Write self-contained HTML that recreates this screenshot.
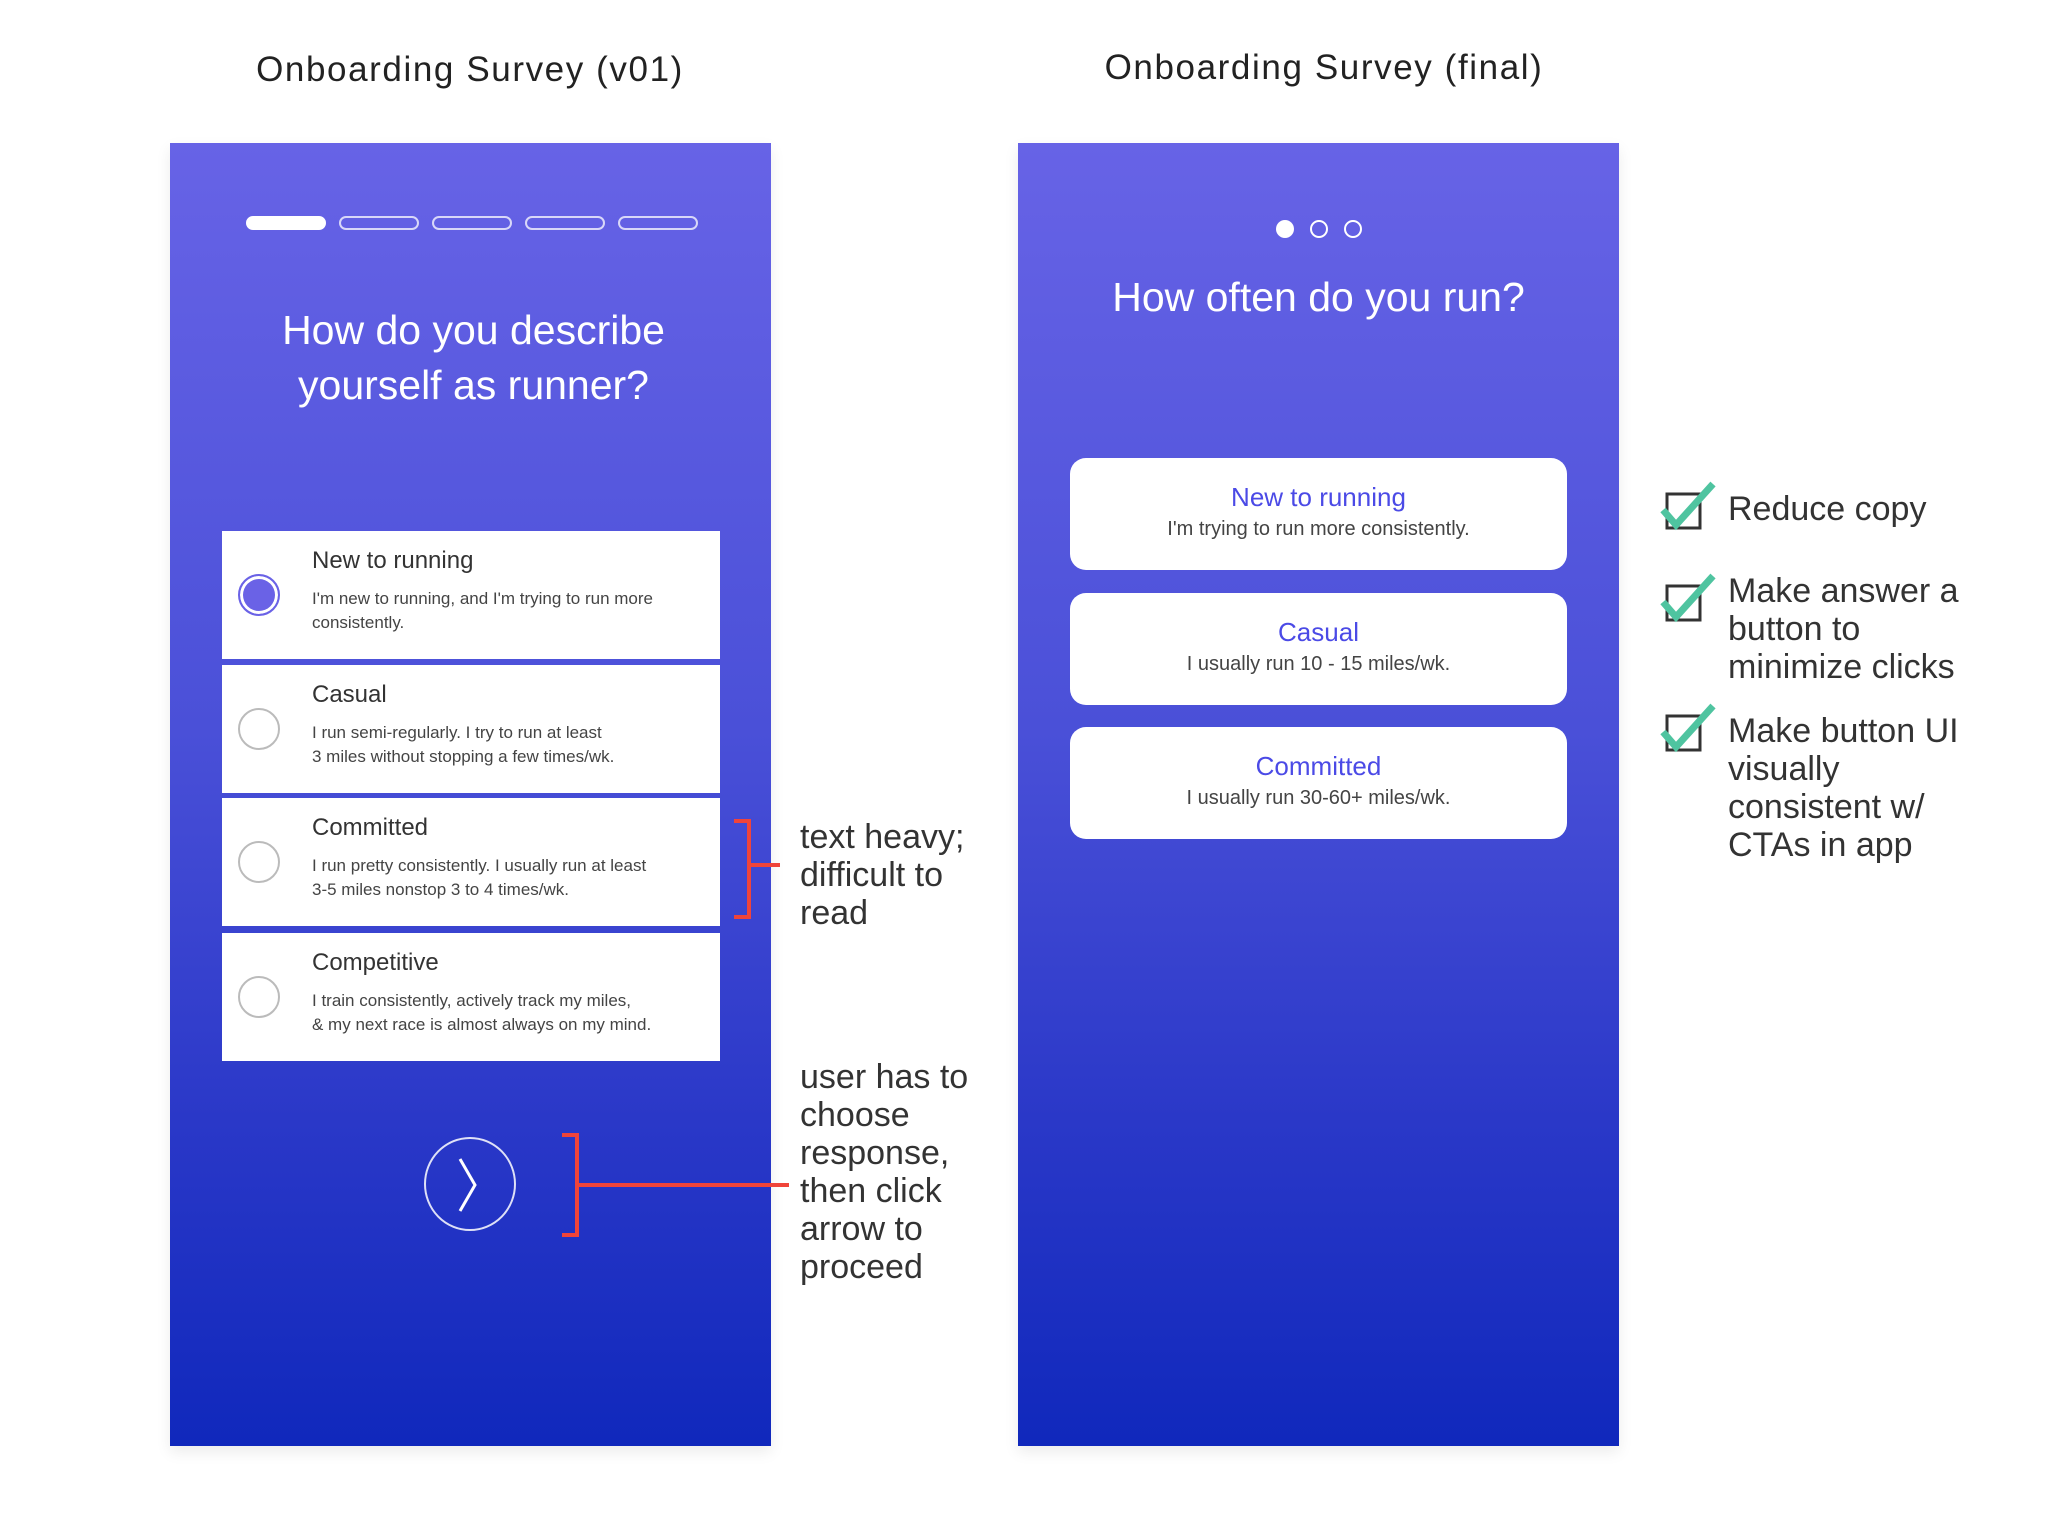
<!DOCTYPE html>
<html><head><meta charset="utf-8"><style>
*{margin:0;padding:0;box-sizing:border-box}
body{width:2046px;height:1522px;background:#fff;position:relative;overflow:hidden;font-family:"Liberation Sans",sans-serif}
.abs{position:absolute}
.panel{position:absolute;top:143px;width:601px;height:1303px;background:linear-gradient(#6763e6,#4a50d8 45%,#2a38c8 75%,#1028bc);box-shadow:0 6px 14px rgba(0,0,0,0.08)}
.cap{position:absolute;font-size:35px;color:#222;letter-spacing:1.6px;text-align:center;width:600px}
.bar{position:absolute;top:216px;width:80px;height:14px;border:2px solid rgba(255,255,255,.75);border-radius:8px}
.h{position:absolute;color:#fff;font-size:41px;text-align:center;width:601px;line-height:55px}
.opt{position:absolute;left:222px;width:498px;height:128px;background:#fff}
.opt .r{position:absolute;left:16px;top:43px;width:42px;height:42px;border-radius:50%;border:2px solid #bbb}
.opt .t{position:absolute;left:90px;top:16px;font-size:24px;color:#333}
.opt .d{position:absolute;left:90px;top:56px;font-size:17px;color:#444;line-height:24px}
.ann{position:absolute;left:800px;font-size:34px;color:#333;line-height:38px}
.red{position:absolute;background:#f0443a}
.btn{position:absolute;left:1070px;width:497px;height:112px;background:#fff;border-radius:16px;text-align:center}
.btn .t{font-size:26px;color:#4b4ae6;margin-top:24px}
.btn .d{font-size:20px;color:#444;margin-top:5px}
.ck{position:absolute;left:1728px;font-size:34px;color:#333;line-height:38px}
</style></head><body>
<div class="cap" style="left:170px;top:50px">Onboarding Survey (v01)</div>
<div class="cap" style="left:1024px;top:48px">Onboarding Survey (final)</div>

<div class="panel" style="left:170px"></div>
<div class="bar" style="left:246px;background:#fff;border-color:#fff"></div>
<div class="bar" style="left:339px"></div>
<div class="bar" style="left:432px"></div>
<div class="bar" style="left:525px"></div>
<div class="bar" style="left:618px"></div>
<div class="h" style="left:173px;top:303px">How do you describe<br>yourself as runner?</div>

<div class="opt" style="top:531px"><div class="r" style="border-color:#6a62e6;background:#6a62e6;box-shadow:inset 0 0 0 3px #fff"></div><div class="t">New to running</div><div class="d">I'm new to running, and I'm trying to run more<br>consistently.</div></div>
<div class="opt" style="top:665px"><div class="r"></div><div class="t">Casual</div><div class="d">I run semi-regularly. I try to run at least<br>3 miles without stopping a few times/wk.</div></div>
<div class="opt" style="top:798px"><div class="r"></div><div class="t">Committed</div><div class="d">I run pretty consistently. I usually run at least<br>3-5 miles nonstop 3 to 4 times/wk.</div></div>
<div class="opt" style="top:933px"><div class="r"></div><div class="t">Competitive</div><div class="d">I train consistently, actively track my miles,<br>&amp; my next race is almost always on my mind.</div></div>

<svg class="abs" style="left:418px;top:1134px" width="104" height="100"><ellipse cx="52" cy="50" rx="45" ry="46" fill="none" stroke="#fff" stroke-opacity=".85" stroke-width="2"/><path d="M42 25 L57 51 L42 77" fill="none" stroke="#fff" stroke-width="3"/></svg>

<div class="red" style="left:747px;top:819px;width:4px;height:100px"></div>
<div class="red" style="left:734px;top:819px;width:17px;height:4px"></div>
<div class="red" style="left:734px;top:915px;width:17px;height:4px"></div>
<div class="red" style="left:751px;top:863px;width:29px;height:4px"></div>
<div class="ann" style="top:818px">text heavy;<br>difficult to<br>read</div>

<div class="red" style="left:575px;top:1133px;width:4px;height:104px"></div>
<div class="red" style="left:562px;top:1133px;width:17px;height:4px"></div>
<div class="red" style="left:562px;top:1233px;width:17px;height:4px"></div>
<div class="red" style="left:579px;top:1183px;width:210px;height:4px"></div>
<div class="ann" style="top:1058px">user has to<br>choose<br>response,<br>then click<br>arrow to<br>proceed</div>

<div class="panel" style="left:1018px"></div>
<svg class="abs" style="left:1273px;top:218px" width="94" height="22"><circle cx="12" cy="11" r="9" fill="#fff"/><circle cx="46" cy="11" r="8" fill="none" stroke="#fff" stroke-width="2"/><circle cx="80" cy="11" r="8" fill="none" stroke="#fff" stroke-width="2"/></svg>
<div class="h" style="left:1018px;top:270px">How often do you run?</div>

<div class="btn" style="top:458px"><div class="t">New to running</div><div class="d">I'm trying to run more consistently.</div></div>
<div class="btn" style="top:593px"><div class="t">Casual</div><div class="d">I usually run 10 - 15 miles/wk.</div></div>
<div class="btn" style="top:727px"><div class="t">Committed</div><div class="d">I usually run 30-60+ miles/wk.</div></div>

<svg class="abs" style="left:1658px;top:480px" width="62" height="52"><rect x="9" y="14" width="33" height="34" fill="none" stroke="#333" stroke-width="3"/><path d="M5 30 L18 45 L55 4" fill="none" stroke="#4fc4a0" stroke-width="7"/></svg>
<div class="ck" style="top:490px">Reduce copy</div>
<svg class="abs" style="left:1658px;top:572px" width="62" height="52"><rect x="9" y="14" width="33" height="34" fill="none" stroke="#333" stroke-width="3"/><path d="M5 30 L18 45 L55 4" fill="none" stroke="#4fc4a0" stroke-width="7"/></svg>
<div class="ck" style="top:572px">Make answer a<br>button to<br>minimize clicks</div>
<svg class="abs" style="left:1658px;top:702px" width="62" height="52"><rect x="9" y="14" width="33" height="34" fill="none" stroke="#333" stroke-width="3"/><path d="M5 30 L18 45 L55 4" fill="none" stroke="#4fc4a0" stroke-width="7"/></svg>
<div class="ck" style="top:712px">Make button UI<br>visually<br>consistent w/<br>CTAs in app</div>
</body></html>
